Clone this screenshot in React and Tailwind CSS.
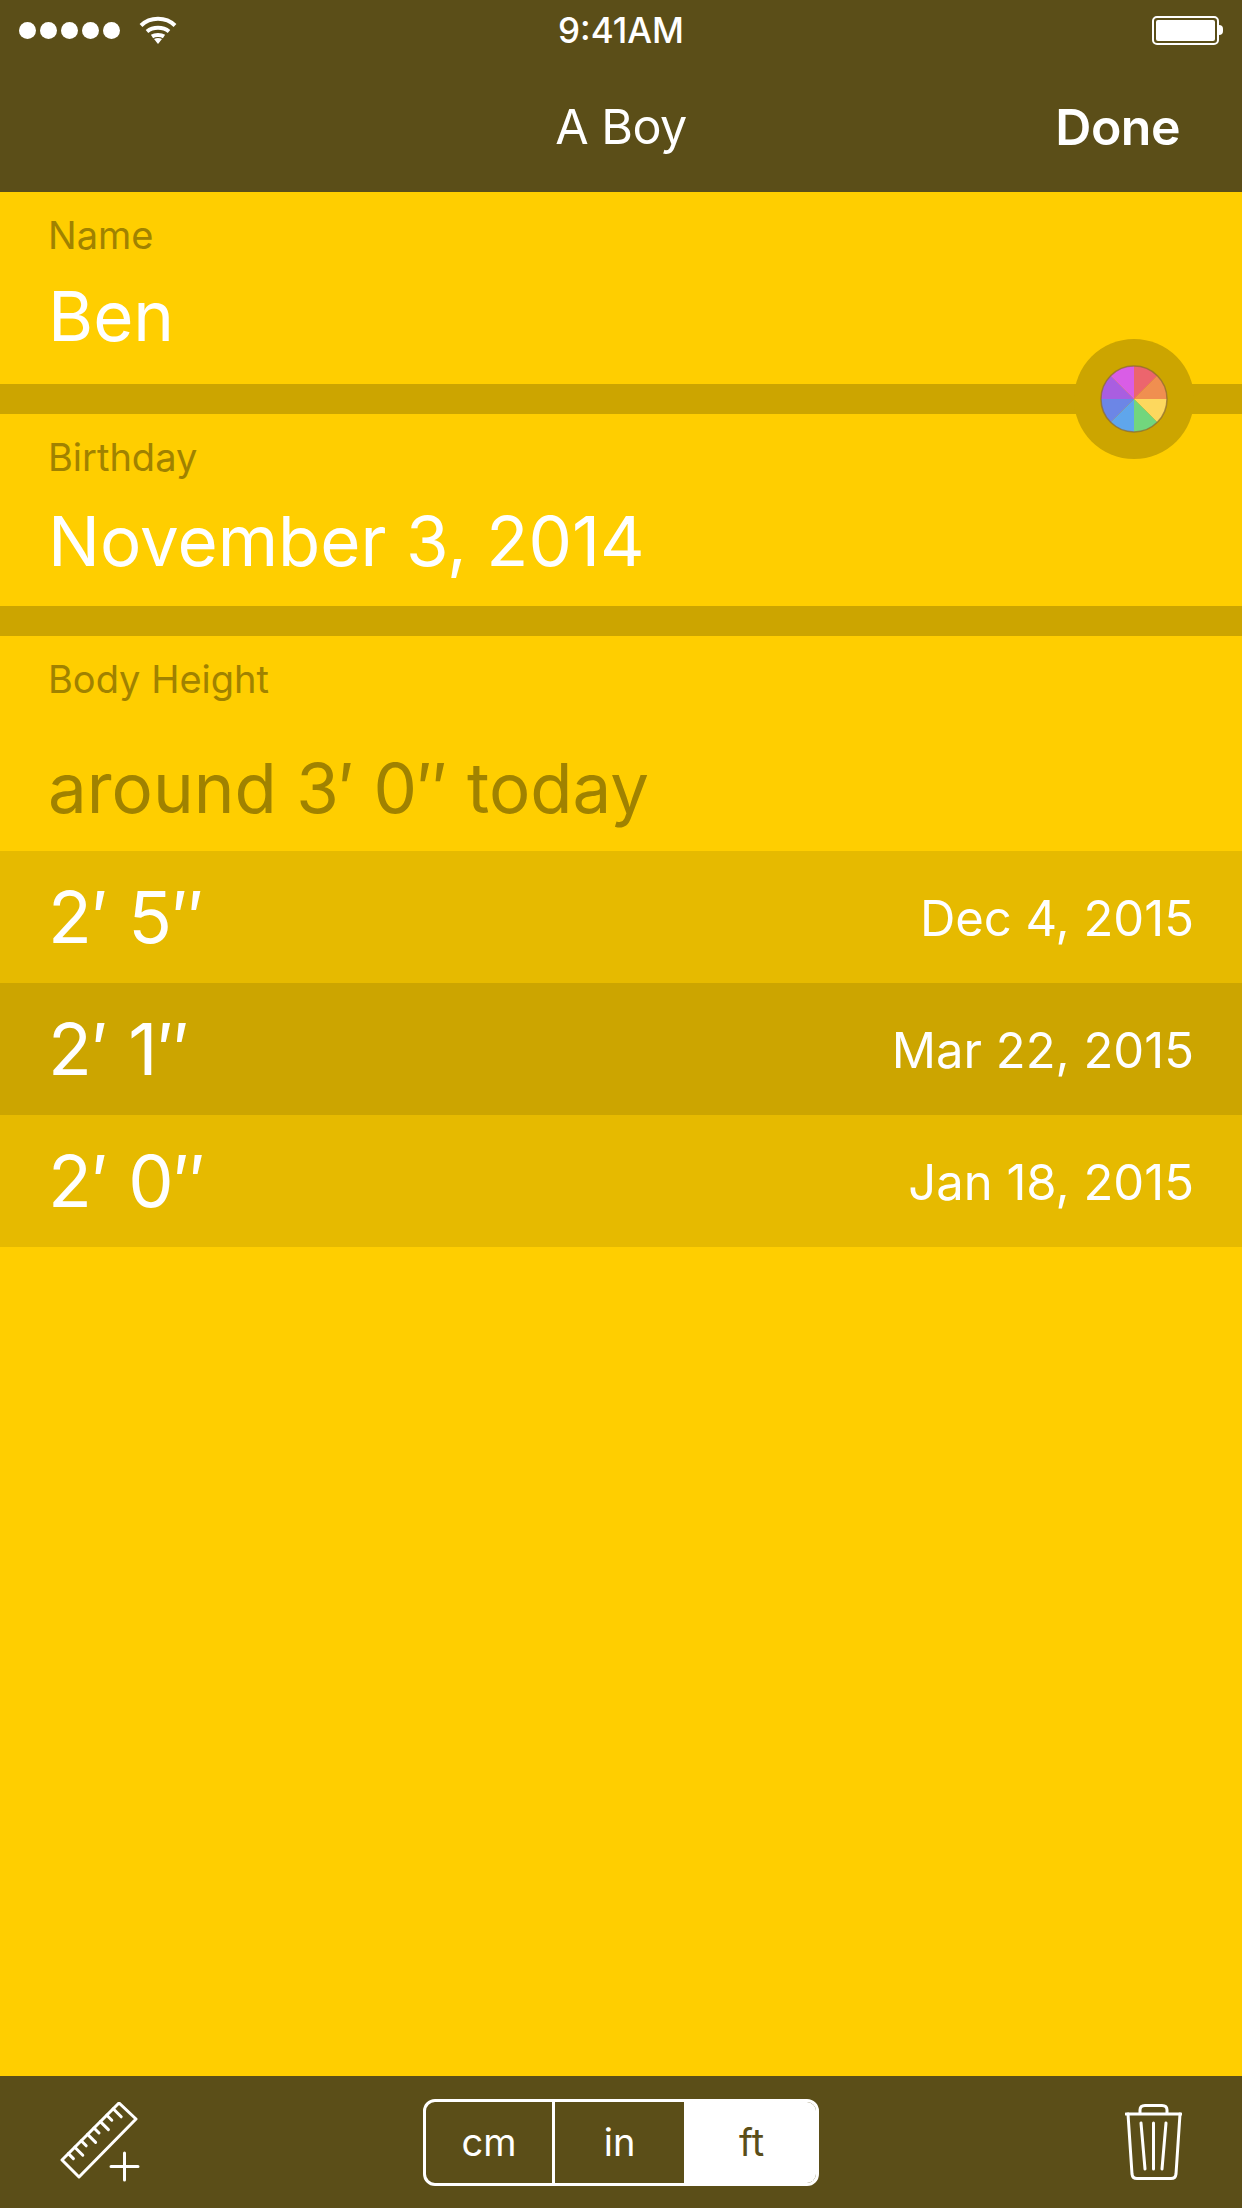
const sectors = [
  { a: -90, c: "#ec656d" },
  { a: -45, c: "#f08f50" },
  { a: 0, c: "#fdd85e" },
  { a: 45, c: "#72d67d" },
  { a: 90, c: "#5fa6ec" },
  { a: 135, c: "#6c86e6" },
  { a: 180, c: "#a95ee0" },
  { a: 225, c: "#d95de6" },
];

const rows = [
  { h: "2′ 5″", d: "Dec 4, 2015", bg: "bg-[#e6ba00]" },
  { h: "2′ 1″", d: "Mar 22, 2015", bg: "bg-[#cca500]" },
  { h: "2′ 0″", d: "Jan 18, 2015", bg: "bg-[#e6ba00]" },
];

const ticks = [1, 2, 3, 4, 5, 6, 7, 8].map((i) => {
  const x = 2 + i * 6.4;
  const y = 58 - i * 6.4;
  const len = i % 2 === 0 ? 8 : 5;
  return `M${x} ${y} L${x + len} ${y + len}`;
});

function Wheel() {
  const r = 33;
  const pt = (deg) => {
    const t = (deg * Math.PI) / 180;
    return `${34 + r * Math.cos(t)} ${34 + r * Math.sin(t)}`;
  };
  return (
    <svg width="68" height="68" viewBox="0 0 68 68">
      {sectors.map((s) => (
        <path key={s.a} d={`M34 34 L${pt(s.a)} A${r} ${r} 0 0 1 ${pt(s.a + 45)} Z`} fill={s.c} />
      ))}
      <circle cx="34" cy="34" r="33" fill="none" stroke="#8a6a30" strokeOpacity="0.7" strokeWidth="1.5" />
    </svg>
  );
}

function Wifi() {
  return (
    <svg width="38" height="28" viewBox="0 0 38 28" fill="none" stroke="white" strokeWidth="4">
      <path d="M2 9.500 C11 0.500 27 0.500 36 9.500" />
      <path d="M8 15.500 C14 10.500 24 10.500 30 15.500" />
      <path d="M13 20.500 C16 18.500 22 18.500 25 20.500" />
      <path d="M15 23 L19 28 L23 23 C20.500 21.500 17.500 21.500 15 23 Z" fill="white" stroke="none" />
    </svg>
  );
}

function Battery() {
  return (
    <div className="flex items-center">
      <div className="w-[67px] h-[29px] rounded-[5px] border-2 border-white p-[2px]">
        <div className="w-full h-full bg-white rounded-[2px]"></div>
      </div>
      <div className="w-[4px] h-[10px] bg-white rounded-r-full"></div>
    </div>
  );
}

export default function App() {
  return (
    <div className="relative w-[1242px] h-[2208px] flex flex-col bg-[#ffce00] text-white font-['Inter','Noto_Sans',sans-serif] overflow-hidden">
      <header className="h-[192px] shrink-0 bg-[#5b4e18]">
        <div className="relative h-[60px] flex items-center justify-between pl-[19px] pr-[19px]">
          <div className="flex items-center gap-[4px]">
            {[0, 1, 2, 3, 4].map((i) => (
              <span key={i} className="w-[17px] h-[17px] rounded-full bg-white"></span>
            ))}
            <span className="ml-[15px] -mt-[1px]">
              <Wifi />
            </span>
          </div>
          <span className="absolute left-0 right-0 text-center text-[35px] font-medium">9:41AM</span>
          <Battery />
        </div>
        <div className="relative flex items-center justify-end h-[130px] pt-[4px] pr-[62px]">
          <span className="absolute left-0 right-0 text-center text-[48.500px] -tracking-[0.5px]">A Boy</span>
          <span className="text-[50px] font-semibold -tracking-[0.5px]">Done</span>
        </div>
      </header>

      <section className="h-[192px] shrink-0 px-[48px] pt-[18px]">
        <p className="text-[38px] leading-[50px] text-[#a08200]">Name</p>
        <p className="text-[69px] leading-[80px] mt-[16px]">Ben</p>
      </section>
      <div className="h-[30px] shrink-0 bg-[#cca500]"></div>

      <section className="h-[192px] shrink-0 px-[48px] pt-[18px]">
        <p className="text-[38px] leading-[50px] text-[#a08200]">Birthday</p>
        <p className="text-[69px] leading-[80px] mt-[19px]">November 3, 2014</p>
      </section>
      <div className="h-[30px] shrink-0 bg-[#cca500]"></div>

      <section className="h-[215px] shrink-0 px-[48px] pt-[18px]">
        <p className="text-[38px] leading-[50px] text-[#a08200]">Body Height</p>
        <p className="text-[69px] leading-[80px] mt-[44px] text-[#a08200]">around 3′ 0″ today</p>
      </section>

      {rows.map((r) => (
        <div key={r.d} className={`h-[132px] ${r.bg} shrink-0 flex items-center justify-between px-[48px]`}>
          <span className="text-[72px]">{r.h}</span>
          <span className="text-[49px] pt-[4px]">{r.d}</span>
        </div>
      ))}

      <div className="flex-1"></div>

      <footer className="h-[132px] shrink-0 bg-[#5b4e18] flex items-center justify-between pl-[60px] pr-[60px]">
        <div className="w-[140px]">
          <svg width="80" height="80" viewBox="0 0 80 80" fill="none" stroke="white" strokeWidth="3" strokeLinecap="round" strokeLinejoin="round">
            <path d="M2 58 L59 1 L76 17 L19 75 Z" />
            <path d={ticks.join(" ")} />
            <path d="M64.500 51 V78 M51 64.500 H78" />
          </svg>
        </div>
        <div className="flex w-[396px] h-[87px] rounded-[12px] border-[3px] border-white overflow-hidden">
          <div className="w-[129px] flex items-center justify-center border-r-[3px] border-white text-[38px] leading-none">cm</div>
          <div className="w-[129px] flex items-center justify-center text-[38px] leading-none">in</div>
          <div className="flex-1 bg-white text-[#5b4e18] flex items-center justify-center text-[38px] leading-none pl-[3px]">ft</div>
        </div>
        <div className="w-[140px] flex justify-end">
          <svg width="57" height="76" viewBox="0 0 57 76" fill="none" stroke="white" strokeWidth="3" strokeLinecap="round" strokeLinejoin="round">
            <path d="M1 10 H56" />
            <path d="M15 9 V6 Q15 1.500 20 1.500 H37 Q42 1.500 42 6 V9" />
            <path d="M3 10 L7 70 Q7.500 74.500 12 74.500 H46 Q50.500 74.500 51 70 L55 10" />
            <path d="M16 19 L20 65 M28.500 19 V65 M41 19 L37 65" />
          </svg>
        </div>
      </footer>

      <div className="absolute left-[1074px] top-[339px] w-[120px] h-[120px] rounded-full bg-[#cca500] flex items-center justify-center">
        <Wheel />
      </div>
    </div>
  );
}
